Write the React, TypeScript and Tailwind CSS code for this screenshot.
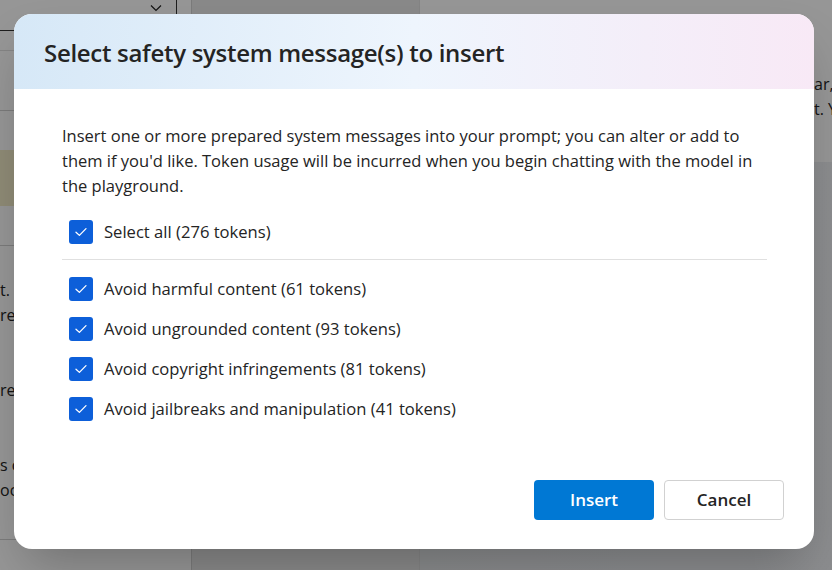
import { useState } from "react";

const items = [
  { id: "harmful", label: "Avoid harmful content", tokens: 61 },
  { id: "ungrounded", label: "Avoid ungrounded content", tokens: 93 },
  { id: "copyright", label: "Avoid copyright infringements", tokens: 81 },
  { id: "jailbreak", label: "Avoid jailbreaks and manipulation", tokens: 41 },
];

function Check({ checked, onClick }: { checked: boolean; onClick: () => void }) {
  return (
    <button
      type="button"
      onClick={onClick}
      className={`flex h-[24px] w-[24px] shrink-0 items-center justify-center rounded-[3px] ${
        checked ? "bg-[#0d5fd9]" : "border border-[#616161] bg-white"
      }`}
    >
      {checked && (
        <svg width="16" height="16" viewBox="0 0 16 16" fill="none">
          <path d="M3 8.2 L6.4 11.4 L13 4.6" stroke="white" strokeWidth="1.3" strokeLinecap="round" strokeLinejoin="round" />
        </svg>
      )}
    </button>
  );
}

function Row({ checked, onClick, children }: { checked: boolean; onClick: () => void; children: React.ReactNode }) {
  return (
    <label className="flex h-[40px] cursor-pointer items-center gap-[11px] pl-[7px]">
      <Check checked={checked} onClick={onClick} />
      <span className="text-[16.6px] text-[#242424]">{children}</span>
    </label>
  );
}

export default function App() {
  const [selected, setSelected] = useState<Record<string, boolean>>({
    harmful: true,
    ungrounded: true,
    copyright: true,
    jailbreak: true,
  });

  const allOn = items.every((i) => selected[i.id]);
  const total = items.reduce((s, i) => s + i.tokens, 0);

  const toggleAll = () => {
    const next: Record<string, boolean> = {};
    items.forEach((i) => (next[i.id] = !allOn));
    setSelected(next);
  };

  return (
    <div className="relative flex h-[570px] w-[832px] overflow-hidden bg-white font-['Open_Sans',sans-serif] text-[#242424]">
      {/* page behind the dialog */}
      <aside className="flex w-[192px] shrink-0 flex-col border-r border-[#d1d1d1] bg-white">
        <div className="flex h-[31px] w-[177px] items-start justify-end border-b border-r border-[#333] pr-[14px] pt-[4px]">
          <svg width="12" height="8" viewBox="0 0 12 8" fill="none">
            <path d="M1 1.5 L6 6.5 L11 1.5" stroke="#222" strokeWidth="1.2" />
          </svg>
        </div>
        <div className="mt-[19px] border-t border-[#e0e0e0]" />
        <div className="mt-[59px] border-t border-[#d1d1d1]" />
        <div className="mt-[39px] h-[56px] bg-[#f4ecc9]" />
        <div className="mt-[39px] border-t border-[#d1d1d1]" />
        <div className="mt-[32px] text-[16px] leading-[25px] whitespace-nowrap">
          <p>t. Use</p>
          <p>respond</p>
          <p className="mt-[50px]">reply</p>
          <p className="mt-[50px]">s of</p>
          <p>occur</p>
        </div>
        <div className="mt-[36px] border-t border-[#d1d1d1]" />
      </aside>
      <div className="w-[228px] shrink-0 border-r border-[#e0e0e0] bg-[#e9e9e9]" />
      <main className="flex flex-1 flex-col">
        <div className="h-[162px] bg-white pt-[72px] pl-[394px] text-[16px] leading-[25px] whitespace-nowrap">
          <p>ar,</p>
          <p>t. Y</p>
        </div>
        <div className="flex-1 bg-gradient-to-r from-[#e9ecef] to-[#eef0f3]" />
      </main>

      {/* overlay + dialog */}
      <div className="absolute inset-0 bg-[rgba(0,0,0,0.41)] p-[14px]">
        <div className="flex h-[535px] w-[800px] flex-col overflow-hidden rounded-[18px] bg-white shadow-2xl">
          <div className="flex h-[75px] shrink-0 items-center bg-gradient-to-r from-[#d6e8f7] via-[#eef5fd] to-[#f8e9f6] px-[30px]">
            <h2 className="pt-[2px] text-[24px] font-semibold tracking-[-0.3px] text-[#242424]">Select safety system message(s) to insert</h2>
          </div>
          <div className="flex flex-1 flex-col px-[48px] pt-[34px]">
            <p className="pr-[10px] text-[16.5px] leading-[25px] text-[#242424]">
              Insert one or more prepared system messages into your prompt; you can alter or add to them if you'd like. Token usage will be incurred when you begin chatting with the model in the playground.
            </p>
            <div className="mt-[14px]">
              <Row checked={allOn} onClick={toggleAll}>
                Select all ({total} tokens)
              </Row>
            </div>
            <div className="mt-[7px] mr-[-1px] border-t border-[#e0e0e0]" />
            <div className="mt-[9px] flex flex-col">
              {items.map((i) => (
                <Row key={i.id} checked={!!selected[i.id]} onClick={() => setSelected({ ...selected, [i.id]: !selected[i.id] })}>
                  {i.label} ({i.tokens} tokens)
                </Row>
              ))}
            </div>
            <div className="mt-auto mb-[29px] flex justify-end gap-[10px] mr-[-18px]">
              <button className="h-[40px] w-[120px] rounded-[4px] bg-[#0078d4] text-[17px] font-semibold text-white">Insert</button>
              <button className="h-[40px] w-[120px] rounded-[4px] border border-[#d1d1d1] bg-white text-[17px] font-semibold text-[#242424]">Cancel</button>
            </div>
          </div>
        </div>
      </div>
    </div>
  );
}
